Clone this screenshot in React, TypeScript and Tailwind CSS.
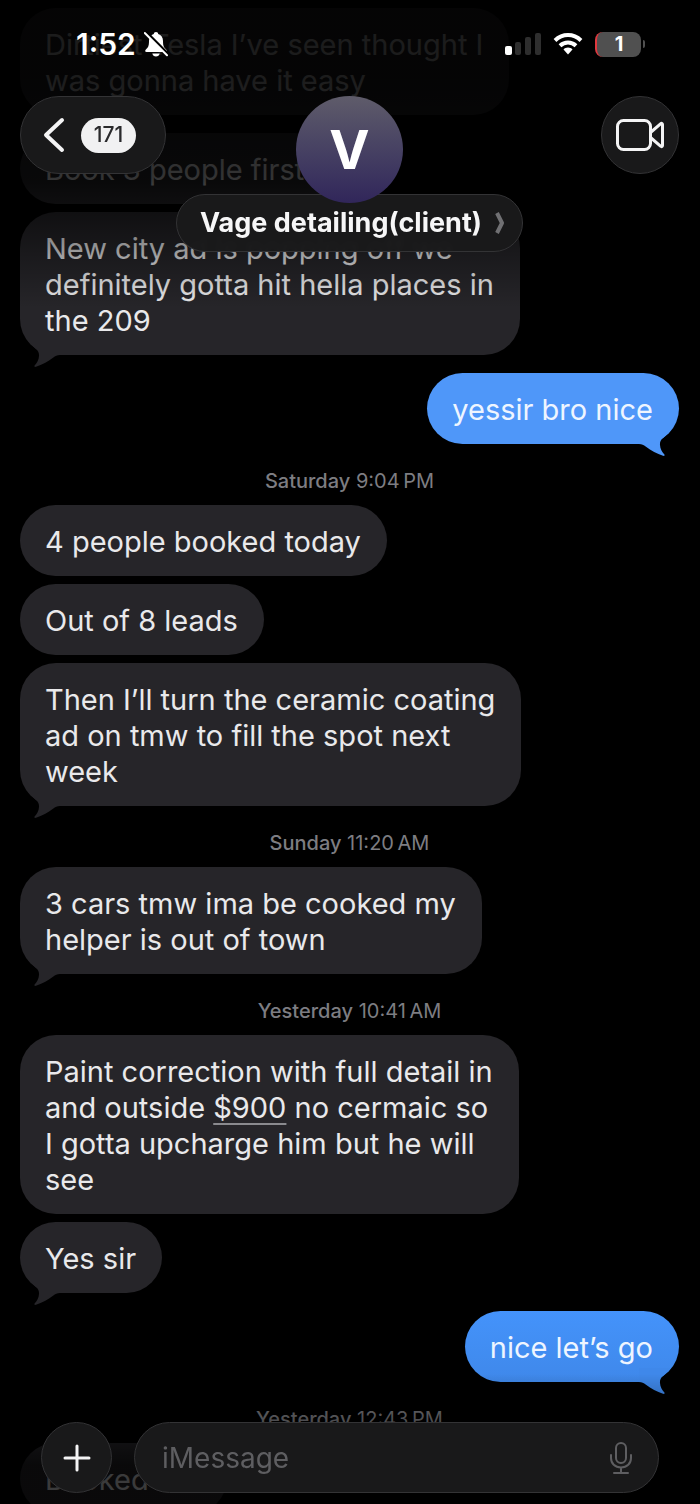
import type { ReactNode } from 'react';
import clsx from 'clsx';

type Message = {
  lines: ReactNode[];
  mine?: boolean;
  tail?: boolean;
  color?: string;
};

type Group = {
  day?: string;
  time?: string;
  messages: Message[];
};

const groups: Group[] = [
  {
    messages: [
      { lines: ['Dirtiest Tesla I’ve seen thought I', 'was gonna have it easy'], tail: true },
      { lines: ['Book 3 people first'] },
      {
        lines: ['New city ad is popping off we', 'definitely gotta hit hella places in', 'the 209'],
        tail: true,
      },
      { lines: ['yessir bro nice'], mine: true, tail: true, color: 'bg-[#4f97f9] text-[#4f97f9]' },
    ],
  },
  {
    day: 'Saturday',
    time: '9:04\u202fPM',
    messages: [
      { lines: ['4 people booked today'] },
      { lines: ['Out of 8 leads'] },
      {
        lines: ['Then I’ll turn the ceramic coating', 'ad on tmw to fill the spot next', 'week'],
        tail: true,
      },
    ],
  },
  {
    day: 'Sunday',
    time: '11:20\u202fAM',
    messages: [{ lines: ['3 cars tmw ima be cooked my', 'helper is out of town'], tail: true }],
  },
  {
    day: 'Yesterday',
    time: '10:41\u202fAM',
    messages: [
      {
        lines: [
          'Paint correction with full detail in',
          <>
            and outside{' '}
            <a href="#" className="underline decoration-[#8a8a8e] decoration-2 underline-offset-[5px]">
              $900
            </a>{' '}
            no cermaic so
          </>,
          'I gotta upcharge him but he will',
          'see',
        ],
      },
      { lines: ['Yes sir'], tail: true },
      {
        lines: ['nice let’s go'],
        mine: true,
        tail: true,
        color: 'bg-linear-to-b from-[#4493fb] to-[#3f88ea] text-[#3f88ea]',
      },
    ],
  },
  {
    day: 'Yesterday',
    time: '12:43\u202fPM',
    messages: [{ lines: ['Booked out'] }],
  },
];

const glass = 'border border-[#333335] bg-[#19191b]/98 backdrop-blur-[2px]';

const Tail = ({ mine }: { mine?: boolean }) => (
  <svg
    viewBox="0 0 40 30"
    fill="currentColor"
    aria-hidden="true"
    className={clsx('absolute -bottom-3 h-[30px] w-10', mine ? 'right-0 -scale-x-100' : 'left-0')}
  >
    <path d="M8 4C15 12 19.500 13 19 19C18.800 23 17 26 14.600 28.600C14 29.600 14.800 30.200 16 29.800C22 28 28 24.500 33 20.800C35.500 19 37 18 40 18V4H8Z" />
  </svg>
);

const Bubble = ({ lines, mine, tail, color = 'bg-[#262529] text-[#262529]' }: Message) => (
  <div
    className={clsx(
      'relative w-fit rounded-[36px] pt-[19px] pr-[26px] pb-4 pl-[25px]',
      mine ? 'self-end' : 'self-start',
      color,
    )}
  >
    {tail && <Tail mine={mine} />}
    <p className={clsx('relative text-[29px] leading-9', mine ? 'text-[#eef5ff]' : 'text-[#e9e9eb]')}>
      {lines.map((line, i) => (
        <span key={i} className="block whitespace-nowrap">
          {line}
        </span>
      ))}
    </p>
  </div>
);

const StatusBar = () => (
  <div className="flex h-[88px] items-center justify-between pr-[55px] pl-[76px] text-white">
    <div className="flex items-center gap-2">
      <time className="text-[30px] font-semibold">1:52</time>
      <svg viewBox="0 0 24 26" className="h-[26px] w-6" aria-hidden="true">
        <path
          fill="currentColor"
          d="M12 1C10.600 1 9.800 1.900 9.800 3C6.800 4 5 6.600 5 10C5 15.500 4 16.500 1.500 19C.8 20 1.300 21 2.500 21H21.500C22.700 21 23.200 20 22.500 19C20 16.500 19 15.500 19 10C19 6.600 17.200 4 14.200 3C14.200 1.900 13.400 1 12 1ZM8.300 22.500H15.700C15.300 24.400 13.900 25.500 12 25.500S8.700 24.400 8.300 22.500Z"
        />
        <path d="M2 1L24 23" stroke="#000" strokeWidth="3" />
        <path d="M.8 2L23 24.200" stroke="currentColor" strokeWidth="2" strokeLinecap="round" />
      </svg>
    </div>
    <div className="flex items-center gap-3">
      <svg viewBox="0 0 36 24" className="h-6 w-9" aria-hidden="true">
        <rect x="0" y="14" width="7" height="9" rx="2" fill="#fff" />
        <rect x="10" y="10" width="6" height="13" rx="2" fill="#2e2e2e" />
        <rect x="20" y="5" width="6" height="18" rx="2" fill="#2e2e2e" />
        <rect x="30" y="1" width="6" height="22" rx="2" fill="#2e2e2e" />
      </svg>
      <svg viewBox="0 0 30 24" className="h-6 w-[30px]" fill="none" stroke="currentColor" aria-hidden="true">
        <path d="M2 8.500C9.500 1.300 20.500 1.300 28 8.500" strokeWidth="4" />
        <path d="M7 13.700C11.700 9.400 18.300 9.400 23 13.700" strokeWidth="4" />
        <path d="M15 15.500C13.200 15.500 11.700 16.200 10.500 17.400L15 22.500L19.500 17.400C18.300 16.200 16.800 15.500 15 15.500Z" fill="currentColor" stroke="none" />
      </svg>
      <div className="flex items-center gap-[2px]">
        <span className="flex h-[25px] w-[46px] items-center justify-center rounded-lg border-l-2 border-[#e0383e] bg-[#505050] text-xl font-bold">
          1
        </span>
        <span className="h-2 w-[2px] rounded-r bg-[#505050]" />
      </div>
    </div>
  </div>
);

const Header = () => (
  <header className="absolute inset-x-0 top-0 bg-linear-to-b from-black/88 from-25% via-black/78 via-58% to-transparent pb-14">
    <StatusBar />
    <nav className="grid grid-cols-[1fr_auto_1fr] items-start pt-2 pr-[21px] pl-5">
      <button
        aria-label="Back, 171 unread"
        className={clsx('flex h-[78px] w-[146px] items-center gap-4 justify-self-start rounded-full pl-[22px]', glass)}
      >
        <svg viewBox="0 0 22 36" className="h-9 w-[22px]" fill="none" stroke="#f4f4f5" aria-hidden="true">
          <path d="M19 3L3 18L19 33" strokeWidth="4" strokeLinecap="round" strokeLinejoin="round" />
        </svg>
        <span className="flex h-[35px] w-[55px] items-center justify-center rounded-full bg-[#f1f1f2] text-[21px] font-medium text-[#2a2a2c]">
          171
        </span>
      </button>
      <div className="flex flex-col items-center">
        <div className="z-10 flex size-[107px] items-center justify-center rounded-full bg-linear-to-b from-[#5f5c6a] to-[#31265a] text-[54px] font-bold text-white">
          V
        </div>
        <button
          className={clsx(
            '-mt-[9px] flex h-[58px] items-center gap-3 rounded-full pr-[17px] pl-[23px] text-[27px] font-bold text-[#f6f6f7]',
            glass,
          )}
        >
          Vage detailing(client)
          <svg viewBox="0 0 11 24" className="h-6 w-[11px]" fill="none" stroke="#707073" aria-hidden="true">
            <path d="M3 2L8 12L3 22" strokeWidth="4" strokeLinejoin="round" />
          </svg>
        </button>
      </div>
      <button
        aria-label="FaceTime"
        className={clsx('flex size-[78px] items-center justify-center justify-self-end rounded-full', glass)}
      >
        <svg viewBox="0 0 48 32" className="h-8 w-12" fill="none" stroke="#f4f4f5" strokeWidth="3" strokeLinejoin="round" aria-hidden="true">
          <rect x="1.500" y="1.500" width="33" height="29" rx="6" />
          <path d="M34.500 13.500L44.500 4.800C45.500 4 46.500 4.300 46.500 5.500V26.500C46.500 27.700 45.500 28 44.500 27.200L34.500 18.500" />
        </svg>
      </button>
    </nav>
  </header>
);

const Composer = () => (
  <footer className="absolute inset-x-0 bottom-0 flex gap-[22px] bg-linear-to-b from-transparent to-black/75 to-70% px-[41px] pt-12 pb-[11px]">
    <button
      aria-label="Add attachment"
      className={clsx('flex size-[71px] shrink-0 items-center justify-center rounded-full', glass)}
    >
      <svg viewBox="0 0 28 28" className="size-7" stroke="#f4f4f5" strokeWidth="3" strokeLinecap="round" aria-hidden="true">
        <path d="M14 2V26M2 14H26" />
      </svg>
    </button>
    <div className={clsx('flex h-[71px] min-w-0 flex-1 items-center rounded-full pr-[26px] pl-[27px]', glass)}>
      <input
        type="text"
        aria-label="iMessage"
        placeholder="iMessage"
        className="min-w-0 flex-1 bg-transparent text-[28px] text-white outline-none placeholder:text-[#5e5e61]"
      />
      <button aria-label="Dictate">
        <svg viewBox="0 0 22 32" className="h-8 w-[22px]" fill="none" stroke="#5e5e61" strokeWidth="2" strokeLinecap="round" aria-hidden="true">
          <rect x="6" y="1" width="10" height="20" rx="5" />
          <path d="M1 13V16C1 21.500 5 25.500 11 25.500S21 21.500 21 16V13M11 25.500V31M4 31H18" />
        </svg>
      </button>
    </div>
  </footer>
);

const App = () => {
  return (
    <div className="relative h-screen overflow-hidden bg-black font-['Inter',sans-serif]">
      <main className="flex flex-col pt-2 pr-[21px] pl-5">
        {groups.map((group, g) => (
          <section key={g} className="flex flex-col">
            {group.day && (
              <h2 className="pt-[25px] pb-3 text-center text-xl leading-6 text-[#7d7d82]">
                <span className="font-medium">{group.day}</span> {group.time}
              </h2>
            )}
            {group.messages.map((message, i) => (
              <div
                key={i}
                className={clsx('flex flex-col', i > 0 && (group.messages[i - 1].tail || message.mine ? 'mt-[18px]' : 'mt-2'))}
              >
                <Bubble {...message} tail={message.tail && !(g === 0 && i === 0)} />
              </div>
            ))}
          </section>
        ))}
      </main>
      <Header />
      <Composer />
    </div>
  );
};

export default App;
